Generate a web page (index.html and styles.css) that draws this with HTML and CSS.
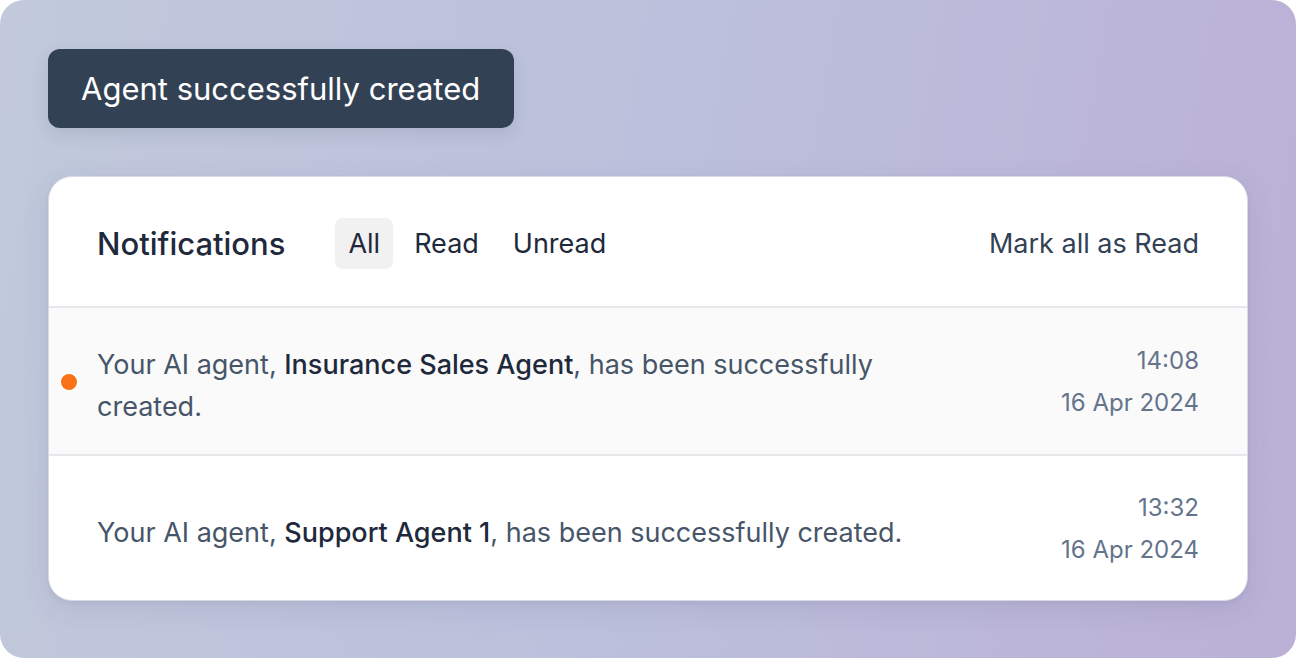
FILE: index.html
```html
<!DOCTYPE html>
<html lang="en">
<head>
<meta charset="utf-8">
<title>Notifications</title>
<link rel="stylesheet" href="styles.css">
</head>
<body>
<div class="stage">
  <div class="toast">Agent successfully created</div>
  <section class="card">
    <header class="card-head">
      <h2 class="title">Notifications</h2>
      <nav class="tabs">
        <span class="tab active">All</span>
        <span class="tab">Read</span>
        <span class="tab">Unread</span>
      </nav>
      <span class="mark">Mark all as Read</span>
    </header>
    <div class="row unread">
      <span class="dot"></span>
      <p class="msg">Your AI agent, <b>Insurance Sales Agent</b>, has been successfully created.</p>
      <div class="when"><span>14:08</span><span>16 Apr 2024</span></div>
    </div>
    <div class="row">
      <p class="msg">Your AI agent, <b>Support Agent 1</b>, has been successfully created.</p>
      <div class="when"><span>13:32</span><span>16 Apr 2024</span></div>
    </div>
  </section>
</div>
</body>
</html>
```
FILE: styles.css
```css
* { box-sizing: border-box; }
html, body { margin: 0; padding: 0; background: #ffffff; }
body { font-family: Inter, "Noto Sans", sans-serif; }

.stage {
  width: 1296px;
  height: 658px;
  border-radius: 24px;
  background: linear-gradient(100deg, #c1c9db 0%, #bcc0dc 50%, #bbb0d6 100%);
  padding: 49px 48px 0 48px;
  display: flex;
  flex-direction: column;
  align-items: flex-start;
}

.toast {
  height: 79px;
  padding: 0 34px 0 33px;
  display: flex;
  align-items: center;
  background: #334155;
  color: #ffffff;
  font-size: 31px;
  border-radius: 12px;
  box-shadow: 0 6px 16px rgba(51, 65, 85, 0.12);
}

.card {
  margin-top: 48px;
  width: 1200px;
  background: #ffffff;
  border-radius: 24px;
  border: 1px solid #d8dbe6;
  box-shadow: 0 8px 28px rgba(60, 60, 110, 0.10), 0 2px 4px rgba(60,60,110,0.06);
  overflow: hidden;
}

.card-head {
  height: 131px;
  display: flex;
  align-items: center;
  padding: 3px 48px 0 48px;
  border-bottom: 2px solid #e8e8ec;
}

.title {
  margin: 0;
  font-size: 31px;
  font-weight: 500;
  color: #1e293b;
}

.tabs {
  display: flex;
  gap: 8px;
  margin-left: 50px;
}

.tab {
  height: 51px;
  padding: 0 13px;
  display: flex;
  align-items: center;
  font-size: 27px;
  color: #1e293b;
  border-radius: 8px;
}

.tab.active { background: #f1f1f2; }

.mark {
  margin-left: auto;
  font-size: 27px;
  color: #334155;
}

.row {
  position: relative;
  display: flex;
  align-items: center;
  padding: 31px 48px 29px 48px;
}

.row.unread {
  padding: 32px 48px 30px 48px;
  background: #fafafa;
  border-bottom: 2px solid #e8e8ec;
}

.dot {
  position: absolute;
  left: 10px;
  top: 50%;
  width: 20px;
  height: 20px;
  margin-top: -9px;
  border-radius: 50%;
  background: #f97316;
  border: 2px solid #ffffff;
}

.msg {
  margin: 0 0 -4px 0;
  flex: 1;
  max-width: 820px;
  font-size: 27px;
  line-height: 42px;
  color: #475569;
  padding-top: 3px;
}

.msg b {
  font-weight: 500;
  color: #1e293b;
}

.when {
  margin-left: auto;
  display: flex;
  flex-direction: column;
  align-items: flex-end;
  font-size: 24px;
  line-height: 42px;
  color: #64748b;
}
```
